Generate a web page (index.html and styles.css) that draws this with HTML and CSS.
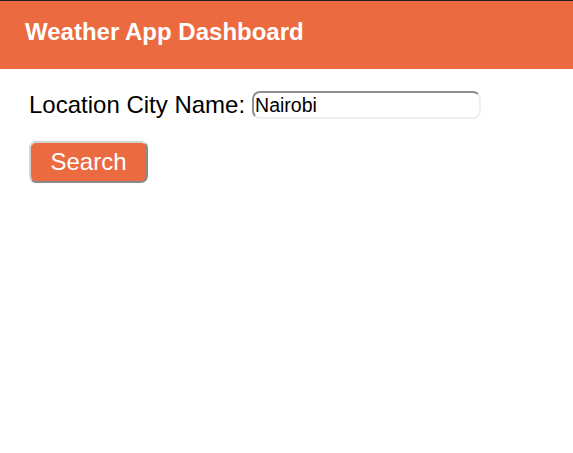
FILE: index.html
```html
<!DOCTYPE html>
<html>
<head>
<meta charset="utf-8">
<link rel="stylesheet" href="styles.css">
</head>
<body>
<header class="topbar"><h1 class="title">Weather App Dashboard</h1></header>
<main class="content">
  <div class="row">
    <label class="label" for="city">Location City Name:</label>
    <input class="city" id="city" type="text" value="Nairobi">
  </div>
  <button class="search">Search</button>
</main>
</body>
</html>
```
FILE: styles.css
```css
html, body { margin: 0; padding: 0; background: #fff; }
body { font-family: "Liberation Sans", Arial, sans-serif; border-top: 1px solid #222; }
.topbar { background: #ec6a40; height: 68px; display: flex; align-items: center; padding: 0 25px; box-sizing: border-box; }
.title { margin: 0; color: #fff; font-size: 24px; font-weight: bold; position: relative; top: -3px; }
.content { padding: 22px 29px; }
.row { display: flex; align-items: center; gap: 7px; height: 28px; }
.label { font-size: 24px; color: #000; }
.city { width: 229px; height: 28px; box-sizing: border-box; border: 2px solid #eee; border-top-color: #8f8f8f; border-left-color: #8f8f8f; border-radius: 8px; padding: 0 1px; font-family: "Liberation Sans", Arial, sans-serif; font-size: 19.5px; color: #000; background: #fff; outline: none; }
.search { display: block; margin-top: 22px; width: 119px; height: 42px; box-sizing: border-box; background: #ec6a40; color: #fff; font-family: "Liberation Sans", Arial, sans-serif; font-size: 24px; border: 2px solid #d4d4d4; border-right-color: #8a8a8a; border-bottom-color: #8a8a8a; border-radius: 7px; padding: 0; }
```
